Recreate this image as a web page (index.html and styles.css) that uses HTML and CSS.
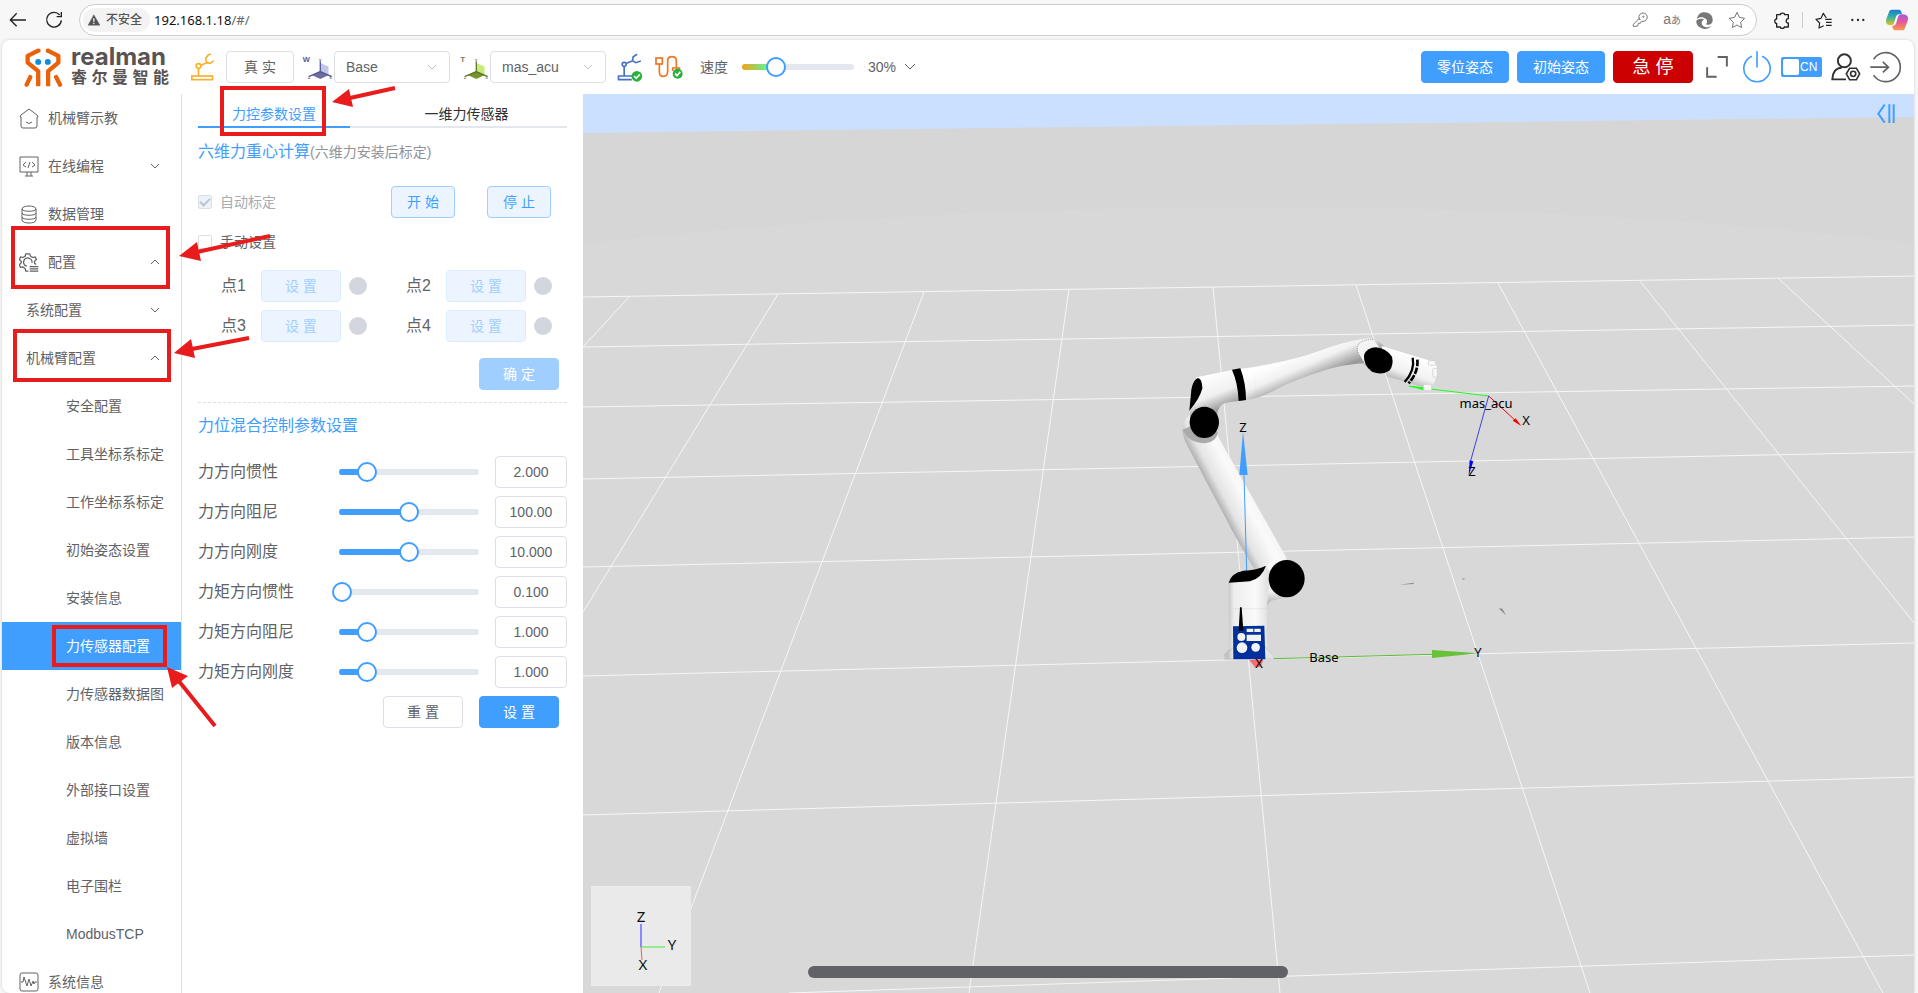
FILE: index.html
```html
<!DOCTYPE html>
<html lang="zh-CN">
<head>
<meta charset="utf-8">
<title>力传感器配置</title>
<link rel="stylesheet" href="styles.css">
</head>
<body>
<div class="window">
  <div class="browser-bar">
    <button class="icon-btn back" aria-label="返回"><svg width="18" height="18" viewBox="27 33 54 54" fill="none" stroke="#222" stroke-width="4"><path d="M78 60H32M50 40L31 60L50 79"/></svg></button>
    <button class="icon-btn reload" aria-label="刷新"><svg width="18" height="18" viewBox="135 33 54 54" fill="none" stroke="#222" stroke-width="4"><path d="M184 61a22 22 0 1 1-5-16M184 36v14h-14"/></svg></button>
    <div class="address">
      <span class="insecure"><svg width="12" height="12" viewBox="263 41 37 35"><path d="M281 42L300 75H263Z" fill="#555" stroke="#555" stroke-linejoin="round"/><path d="M281 53v11M281 67v4" stroke="#f3f3f3" stroke-width="4"/></svg>不安全</span>
      <span class="url">192.168.1.18<span class="url-path">/#/</span></span>
      <span class="address-tools">
        <svg width="16" height="16" viewBox="703 36 48 48" fill="none" stroke="#777" stroke-width="3"><path d="M727 60a12.500 12.500 0 1 1 9 4h-5l-3 6h-6l-2 8-6 1h-7v-6l18-18z"/><circle cx="737" cy="50" r="2"/></svg>
        <span class="translate">a<small>あ</small></span>
        <svg width="17" height="17" viewBox="893 35 50 50"><path d="M895 56C899 40 909 36 918 36C936 36 943 49 942 60C941 72 930 75 922 71C927 66 927 58 920 54C912 49 902 50 895 56ZM894 61C900 53 911 53 917 58C909 60 907 70 914 76C922 82 933 80 939 75C932 86 917 87 908 82C898 78 893 70 894 61Z" fill="#777"/></svg>
        <svg width="18" height="18" viewBox="987 35 54 52" fill="none" stroke="#777" stroke-width="3" stroke-linejoin="round"><path d="M1014 38l7 15 16 3-12 12 3 16-14-8-14 8 3-16-12-12 16-3z"/></svg>
      </span>
    </div>
    <div class="browser-tools">
      <svg width="16" height="17" viewBox="1120 34 48 51" fill="none" stroke="#222" stroke-width="4" stroke-linejoin="round"><path d="M1128 42h11c0-6 13-6 13 0h11v12c-8-1-9 14 0 13v12h-12c0 6-12 6-12 0h-11v-11c-7 1-8-14 0-13z"/></svg>
      <span class="divider"></span>
      <svg width="18" height="17" viewBox="1240 35 54 51" fill="none" stroke="#222" stroke-width="3.500" stroke-linejoin="round"><path d="M1274 53L1265 39L1258 54L1243 57L1254 68L1252 83L1266 76M1271 57H1290M1273 66H1290M1273 75H1290"/></svg>
      <svg width="16" height="6" viewBox="1350 51 48 18" fill="#222"><circle cx="1357" cy="60" r="3.500"/><circle cx="1374" cy="60" r="3.500"/><circle cx="1390" cy="60" r="3.500"/></svg>
      <svg width="22" height="22" viewBox="1455 27 66 66"><defs><linearGradient id="cpa" x1="0" y1="0" x2="0" y2="1"><stop offset="0" stop-color="#1778d6"/><stop offset=".5" stop-color="#38b6a0"/><stop offset="1" stop-color="#f0c018"/></linearGradient><linearGradient id="cpb" x1="0" y1="0" x2="0" y2="1"><stop offset="0" stop-color="#a45be0"/><stop offset=".5" stop-color="#e85a94"/><stop offset="1" stop-color="#f79a4a"/></linearGradient></defs><path d="M1473 29h20c7 0 8 6 10 14h-9c-6 0-8 4-10 10l-5 16c-2 5-5 7-10 7-12 0-16-8-13-19l7-18c2-7 4-10 10-10z" fill="url(#cpa)"/><path d="M1504 91h-20c-6 0-9-4-10-14 7 1 10-3 12-9l5-17c2-5 5-8 11-8 15-1 22 6 18 19l-7 19c-2 7-4 10-9 10z" fill="url(#cpb)"/></svg>
    </div>
  </div>

  <div class="app">
    <header class="topbar">
      <svg class="logo-mark" width="39" height="39" viewBox="16 18 118 118" fill="none" stroke="#ea6109" stroke-width="13" stroke-linejoin="round"><path d="M59 26L27 42V62L59 88V134M88 26L120 42V62L89 88V134"/><path d="M60 26H59M88 26H89M35 106L24 129M113 106L125 129" stroke-linecap="round"/><g fill="#0e8ddd" stroke="none"><circle cx="59" cy="60" r="9"/><circle cx="88" cy="60" r="9"/></g></svg>
      <div class="logo-text"><b class="logo-en">realman</b><b class="logo-cn"><span>睿</span><span>尔</span><span>曼</span><span>智</span><span>能</span></b></div>
      <svg class="arm-icon" width="25" height="28" viewBox="570 158 74 84" fill="none" stroke="#fbb02d" stroke-width="5"><rect x="575" y="227" width="62" height="11"/><path d="M595 226V204M602 195L620 187M620 187L616 175L624 164L632 161M620 187L630 189L641 181"/><circle cx="595" cy="197" r="7"/></svg>
      <button class="btn mode-btn">真 实</button>
      <svg class="axes-icon" width="31" height="25" viewBox="905 155 93 76"><path d="M960 179L985 190V217L960 206Z" fill="#c3c6ea"/><path d="M960 203L986 216L960 228L934 216Z" fill="#6b6f9e"/><path d="M960 175V206L926 220M960 206L994 220" stroke="#555a91" stroke-width="4" fill="none"/><g fill="#555a91" font-weight="700"><text x="907" y="177" font-size="23">W</text><text x="955" y="176" font-size="13">Y</text><text x="922" y="229" font-size="13">Z</text><text x="987" y="229" font-size="13">X</text></g></svg>
      <div class="select"><select aria-label="工作坐标系"><option>Base</option></select><svg width="10" height="7" viewBox="0 0 10 7"><path d="M1 1l4 4 4-4"/></svg></div>
      <svg class="axes-icon tool-axes" width="31" height="25" viewBox="905 155 93 76"><path d="M960 179L985 190V217L960 206Z" fill="#c9ea76"/><path d="M960 203L986 216L960 228L934 216Z" fill="#76932c"/><path d="M960 175V206L926 220M960 206L994 220" stroke="#5d7530" stroke-width="4" fill="none"/><g fill="#77805c" font-weight="700"><text x="911" y="177" font-size="24">T</text><text x="955" y="176" font-size="13">Y</text><text x="922" y="229" font-size="13">Z</text><text x="987" y="229" font-size="13">X</text></g></svg>
      <div class="select"><select aria-label="工具坐标系"><option>mas_acu</option></select><svg width="10" height="7" viewBox="0 0 10 7"><path d="M1 1l4 4 4-4"/></svg></div>
      <svg class="status-arm" width="26" height="29" viewBox="470 155 77 87" fill="none" stroke="#4672c4" stroke-width="5"><path d="M516 224H474V235H514M491 222V197M498 186L517 178M530 159L518 166L516 178L526 184L541 179"/><circle cx="491" cy="189" r="6"/><circle cx="529" cy="225" r="16" fill="#27b23b" stroke="none"/><path d="M521 224L527 231L538 219" stroke="#fff"/></svg>
      <svg class="status-cable" width="28" height="25" viewBox="588 163 84 75" fill="none" stroke="#f07420" stroke-width="5"><rect x="591" y="172" width="19" height="18"/><path d="M601 190V213Q601 227 613 227T626 213V180Q626 168 639 168T652 180V200M641 211V202H661V211"/><circle cx="656" cy="219" r="15" fill="#27b23b" stroke="none"/><path d="M648 218L654 225L664 213" stroke="#fff"/></svg>
      <label class="speed-label" for="speed">速度</label>
      <div class="slider speed-slider"><div class="slider-fill" style="width:30%"></div><input type="range" id="speed" min="0" max="100" value="30"></div>
      <button class="speed-value">30%<svg width="12" height="8" viewBox="0 0 12 8" fill="none" stroke="#606266"><path d="M1 1l5 5 5-5"/></svg></button>
      <div class="top-actions">
        <button class="btn primary pose">零位姿态</button>
        <button class="btn primary pose">初始姿态</button>
        <button class="btn stop">急 停</button>
        <button class="icon-btn full" aria-label="全屏"><svg width="22" height="22" viewBox="918 167 66 67" fill="none" stroke="#606266" stroke-width="6"><path d="M953 170H981V199M921 201V230H950"/></svg></button>
        <button class="icon-btn power" aria-label="电源"><svg width="30" height="32" viewBox="1025 152 90 97" fill="none" stroke="#409eff" stroke-width="5"><path d="M1070 153V202M1055 168A40 40 0 1 0 1085 168"/></svg></button>
        <button class="lang" aria-label="语言"><i></i>CN</button>
        <button class="icon-btn user" aria-label="用户"><svg width="30" height="28" viewBox="1293 158 90 86" fill="none" stroke="#303133" stroke-width="6"><circle cx="1333" cy="182" r="20"/><path d="M1338 239H1296C1296 220 1306 203 1325 203"/><path d="M1349 205H1370L1380 222L1370 240H1349L1339 222Z" stroke-width="5"/><circle cx="1360" cy="222" r="8" stroke-width="5"/></svg></button>
        <button class="icon-btn exit" aria-label="退出"><svg width="32" height="32" viewBox="1410 152 97 97" fill="none" stroke="#606266" stroke-width="5"><path d="M1421 177A44 44 0 1 1 1421 225M1411 201H1465M1449 185L1466 201L1449 217"/></svg></button>
      </div>
    </header>

    <div class="body">
      <nav class="sidebar">
        <a href="#" class="item"><svg width="20" height="21" viewBox="0 0 20 21"><path d="M2 7L10 1L18 7L19 9H18V18Q18 20 16 20H4Q2 20 2 18V9H1Z M7 14Q10 17 13 14"/></svg><span>机械臂示教</span></a>
        <a href="#" class="item"><svg width="20" height="21" viewBox="0 0 20 21"><path d="M1 1H19V16H1ZM8 16V20M12 16V20M6 20H14M7 6L4 9L7 11M13 6L16 9L13 11M11 6L9 12"/></svg><span>在线编程</span><svg class="chev" width="10" height="6" viewBox="0 0 10 6"><path d="M1 1l4 4 4-4"/></svg></a>
        <a href="#" class="item"><svg width="20" height="21" viewBox="0 0 20 21"><path d="M3 5C3 1 17 1 17 5C17 8 3 8 3 5V16C3 20 17 20 17 16V5M3 9C3 12 17 12 17 9M3 13C3 16 17 16 17 13"/></svg><span>数据管理</span></a>
        <a href="#" class="item"><svg class="gear" width="20" height="21" viewBox="57 484 62 63"><path d="M86 542H78L76 534L68 529L62 531L58 523L64 516V512L58 506L62 498L69 500L76 496L78 489H90L93 496L100 500L107 498L111 506L105 512V518L110 522M81 527A13 13 0 1 1 97 517M90 528H117M90 535H117M90 542H117"/></svg><span>配置</span><svg class="chev" width="10" height="6" viewBox="0 0 10 6"><path d="M1 5l4-4 4 4"/></svg></a>
        <a href="#" class="item sub"><span>系统配置</span><svg class="chev" width="10" height="6" viewBox="0 0 10 6"><path d="M1 1l4 4 4-4"/></svg></a>
        <a href="#" class="item sub"><span>机械臂配置</span><svg class="chev" width="10" height="6" viewBox="0 0 10 6"><path d="M1 5l4-4 4 4"/></svg></a>
        <a href="#" class="item leaf">安全配置</a>
        <a href="#" class="item leaf">工具坐标系标定</a>
        <a href="#" class="item leaf">工作坐标系标定</a>
        <a href="#" class="item leaf">初始姿态设置</a>
        <a href="#" class="item leaf">安装信息</a>
        <a href="#" class="item leaf active">力传感器配置</a>
        <a href="#" class="item leaf">力传感器数据图</a>
        <a href="#" class="item leaf">版本信息</a>
        <a href="#" class="item leaf">外部接口设置</a>
        <a href="#" class="item leaf">虚拟墙</a>
        <a href="#" class="item leaf">电子围栏</a>
        <a href="#" class="item leaf">ModbusTCP</a>
        <a href="#" class="item"><svg width="20" height="21" viewBox="0 0 20 21"><path d="M1 3Q1 1 3 1H17Q19 1 19 3V17Q19 19 17 19H3Q1 19 1 17ZM2 10H4L5 5L8 14L10 7L12 14L14 9L15 12L16 10H18"/></svg><span>系统信息</span></a>
      </nav>

      <section class="panel">
        <div class="tabs" role="tablist">
          <button class="tab current" role="tab" aria-selected="true">力控参数设置</button>
          <button class="tab" role="tab">一维力传感器</button>
        </div>
        <h2 class="title">六维力重心计算<small>(六维力安装后标定)</small></h2>
        <div class="row auto">
          <label class="check disabled"><input type="checkbox" checked disabled>自动标定</label>
          <div class="pair"><button class="btn plain">开 始</button><button class="btn plain">停 止</button></div>
        </div>
        <label class="check manual"><input type="checkbox">手动设置</label>
        <div class="points">
          <div class="point"><span>点1</span><button class="btn plain" disabled>设 置</button><i class="lamp"></i></div>
          <div class="point"><span>点2</span><button class="btn plain" disabled>设 置</button><i class="lamp"></i></div>
          <div class="point"><span>点3</span><button class="btn plain" disabled>设 置</button><i class="lamp"></i></div>
          <div class="point"><span>点4</span><button class="btn plain" disabled>设 置</button><i class="lamp"></i></div>
        </div>
        <div class="buttons confirm"><button class="btn primary" disabled>确 定</button></div>
        <h2 class="title second">力位混合控制参数设置</h2>
        <div class="params">
          <div class="param"><label for="p1">力方向惯性</label><div class="slider"><div class="slider-fill" style="width:20%"></div><input type="range" value="20" aria-label="力方向惯性"></div><input class="num" id="p1" value="2.000"></div>
          <div class="param"><label for="p2">力方向阻尼</label><div class="slider"><div class="slider-fill" style="width:50%"></div><input type="range" value="50" aria-label="力方向阻尼"></div><input class="num" id="p2" value="100.00"></div>
          <div class="param"><label for="p3">力方向刚度</label><div class="slider"><div class="slider-fill" style="width:50%"></div><input type="range" value="50" aria-label="力方向刚度"></div><input class="num" id="p3" value="10.000"></div>
          <div class="param"><label for="p4">力矩方向惯性</label><div class="slider"><div class="slider-fill" style="width:2%"></div><input type="range" value="2" aria-label="力矩方向惯性"></div><input class="num" id="p4" value="0.100"></div>
          <div class="param"><label for="p5">力矩方向阻尼</label><div class="slider"><div class="slider-fill" style="width:20%"></div><input type="range" value="20" aria-label="力矩方向阻尼"></div><input class="num" id="p5" value="1.000"></div>
          <div class="param"><label for="p6">力矩方向刚度</label><div class="slider"><div class="slider-fill" style="width:20%"></div><input type="range" value="20" aria-label="力矩方向刚度"></div><input class="num" id="p6" value="1.000"></div>
        </div>
        <div class="buttons"><button class="btn">重 置</button><button class="btn primary">设 置</button></div>
      </section>

      <main class="scene">
        <svg class="world" viewBox="583 94 1331 899" preserveAspectRatio="xMidYMid slice">
          <defs>
            <linearGradient id="upper" gradientUnits="userSpaceOnUse" x1="470" y1="100" x2="520" y2="215"><stop offset="0" stop-color="#fff"/><stop offset=".35" stop-color="#f1f1f1"/><stop offset=".75" stop-color="#999"/><stop offset="1" stop-color="#a5a5a5"/></linearGradient>
            <linearGradient id="lower" gradientUnits="userSpaceOnUse" x1="218" y1="547" x2="330" y2="488"><stop offset="0" stop-color="#999"/><stop offset=".3" stop-color="#e4e4e4"/><stop offset=".7" stop-color="#fafafa"/><stop offset="1" stop-color="#f4f4f4"/></linearGradient>
            <linearGradient id="elbow" gradientUnits="userSpaceOnUse" x1="210" y1="160" x2="250" y2="260"><stop offset="0" stop-color="#fff"/><stop offset=".6" stop-color="#f0f0f0"/><stop offset="1" stop-color="#a0a0a0"/></linearGradient>
            <linearGradient id="wrist" gradientUnits="userSpaceOnUse" x1="800" y1="100" x2="770" y2="190"><stop offset="0" stop-color="#fff"/><stop offset=".6" stop-color="#f1f1f1"/><stop offset="1" stop-color="#a5a5a5"/></linearGradient>
            <linearGradient id="base" gradientUnits="userSpaceOnUse" x1="264" y1="0" x2="382" y2="0"><stop offset="0" stop-color="#c4c4c4"/><stop offset=".15" stop-color="#ededed"/><stop offset=".7" stop-color="#fafafa"/><stop offset="1" stop-color="#e2e2e2"/></linearGradient>
            <linearGradient id="shoulder" gradientUnits="userSpaceOnUse" x1="0" y1="740" x2="0" y2="845"><stop offset="0" stop-color="#fafafa"/><stop offset=".7" stop-color="#f0f0f0"/><stop offset="1" stop-color="#bbb"/></linearGradient>
          </defs>
          <rect x="583" y="94" width="1331" height="899" fill="#cbe0ff"/>
          <path d="M583 133L1914 117V993H583Z" fill="#d6d6d6"/>
          <path d="M583 244Q900 208 1245 207T1914 243V993H583Z" fill="#d8d8d8"/>
          <g stroke="#f6f6f6" stroke-width="1" fill="none"><path d="M583 297L1914 276M583 347L1914 325M583 407L1914 386M583 479L1914 452M583 567L1914 537M583 676L1914 643M583 815L1914 777M789 993L1914 955"/><path d="M630 296L583 347M778 294L583 612M924 292L659 993M1069 289L969 993M1213 287L1280 993M1356 285L1590 993M1498 283L1883 993M1640 281L1914 623M1778 278L1914 404"/></g>
          <g transform="translate(1140 320) scale(.33333)">
            <path d="M127 330C130 300 145 285 160 280L225 330L240 360L440 715C420 760 370 770 340 742Q290 660 260 600Q180 450 140 372Q128 350 127 330Z" fill="url(#lower)"/>
            <path d="M128 330Q145 368 195 370Q228 366 234 338L190 300Z" fill="#aaa"/>
            <path d="M170 172L290 147L318 240L272 246Q240 248 234 272L228 300L150 300V268Z" fill="url(#elbow)"/>
            <path d="M298 147Q440 128 540 92Q630 60 685 55Q730 60 742 100L700 128Q600 130 520 162Q440 190 410 208Q360 236 318 240Z" fill="url(#upper)"/>
            <path d="M700 58Q640 60 655 100L676 135L730 100Z" fill="#f4f4f4"/>
            <path d="M700 58Q640 60 655 100L676 135" fill="none" stroke="#777" stroke-width="2" stroke-dasharray="3 3"/>
            <path d="M276 149L301 145Q318 190 318 240L296 243Q294 190 276 149Z" fill="#000"/>
            <path d="M340 140Q348 180 347 220" fill="none" stroke="#d0d0d0" stroke-dasharray="2 3"/>
            <path d="M173 174Q186 174 187 205Q180 235 148 272L154 210Q158 182 173 174Z" fill="#000"/>
            <ellipse cx="193" cy="307" rx="44" ry="47" fill="#000"/>
            <path d="M725 78L885 127Q902 160 872 208L740 169Z" fill="url(#wrist)"/>
            <path d="M818 113Q826 150 794 186" fill="none" stroke="#000" stroke-width="7"/><path d="M832 119Q836 155 806 190" fill="none" stroke="#000" stroke-width="8" stroke-dasharray="20 4"/>
            <g fill="#f8f8f8" stroke="#ccc" stroke-width="2"><rect x="865" y="122" width="22" height="14" rx="4"/><rect x="878" y="145" width="14" height="26" rx="4"/></g>
            <path d="M672 105Q682 82 708 82Q738 85 756 110Q762 135 748 152Q725 167 696 155Q670 137 672 105Z" fill="#000"/>
            <path d="M312 465L320 752" stroke="#409eff" stroke-width="3"/>
            <path d="M360 745L400 722L440 720L490 800L440 832L405 840Q382 842 380 866H340Z" fill="url(#shoulder)"/>
            <path d="M265 788L270 770L378 738L392 760L380 866V985L398 1003L397 1014L376 1018H256L252 1005L268 985Z" fill="url(#base)"/>
            <path d="M252 1005L278 985M398 1003L374 980M252 1017H280M374 1017H397" stroke="#bbb" stroke-width="2"/>
            <path d="M268 866H380" stroke="#ccc"/>
            <path d="M266 788Q272 760 310 752Q350 750 378 737Q365 775 330 784Q300 787 266 788Z" fill="#000"/>
            <ellipse cx="440" cy="776" rx="54" ry="56" fill="#000"/>
            <path d="M279 919L373 917L376 1018H280Z" fill="#00309c"/><path d="M300 862H305L310 932H296Z" fill="#000"/><g fill="#f2f2f2"><circle cx="304" cy="951" r="12"/><circle cx="306" cy="983" r="16"/><circle cx="347" cy="982" r="13"/><path d="M320 926H340V936H320ZM343 926H362V936H343ZM320 944H363V963H320Z"/></g>
            <path d="M309 335L323 465H298Z" fill="#409eff"/>
            <path d="M400 1016L876 1003" stroke="#5cbb33" stroke-width="3"/><path d="M876 990L1016 1000L876 1014Z" fill="#67c23a"/><path d="M328 1020L370 1018L362 1040L345 1042Z" fill="#f56c6c"/>
            <path d="M778 794L822 788L820 792ZM964 775L976 776L970 779ZM1076 865L1087 866L1098 886Z" fill="#888"/>
            <path d="M1046 228L806 199" stroke="#1bff1b" stroke-width="3"/><path d="M804 197L852 202L850 211Z" fill="#1bff1b"/><rect x="850" y="193" width="25" height="19" rx="5" fill="#f8f8f8" stroke="#ccc" stroke-width="2"/>
            <path d="M1046 228L1130 305" stroke="red" stroke-width="3"/><path d="M1144 318L1118 302L1127 295Z" fill="red"/>
            <path d="M1046 228L990 430" stroke="#4040e0" stroke-width="3"/><path d="M986 467L989 421L1000 424Z" fill="#00f"/>
          </g>
          <g class="scene-text" text-anchor="middle"><text x="1486" y="408">mas_acu</text><text x="1324" y="662">Base</text><text x="1243" y="432">Z</text><text x="1526" y="425">X</text><text x="1472" y="476">Z</text><text x="1478" y="657">Y</text><text x="1259" y="668">X</text></g>
        </svg>
        <button class="icon-btn collapse" aria-label="收起"><svg width="18" height="19" viewBox="1430 313 54 57" fill="none" stroke="#409eff" stroke-width="6"><path d="M1453 315L1434 342L1453 369M1467 314V370M1480 314V370"/></svg></button>
        <svg class="gizmo" width="100" height="100" viewBox="0 0 100 100"><path d="M50 38V61" stroke="#8888ff" stroke-width="2"/><path d="M50 61H74" stroke="#3bf03b" stroke-width="1"/><path d="M50 61L51 74" stroke="#f55" stroke-width="1"/><g class="gizmo-text" text-anchor="middle"><text x="50" y="36">Z</text><text x="81" y="64">Y</text><text x="52" y="84">X</text></g></svg>
        <div class="scene-bar"></div>
      </main>
    </div>
  </div>

  <svg class="marks" viewBox="0 0 1918 993" fill="none" stroke="#e81c1c" stroke-width="4"><rect x="222" y="88" width="102" height="46"/><rect x="13" y="228" width="155" height="59"/><rect x="15" y="331" width="154" height="49"/><rect x="54" y="627" width="111" height="38"/><path d="M395 88L350 98M270 236L197 252M249 338L192 349M215 726L178 680"/><path d="M332 102L349 89L353 107ZM179 256L197 242L201 261ZM174 353L191 339L195 358ZM167 667L188 676L172 688Z" fill="#e81c1c" stroke="none"/></svg>
</div>
</body>
</html>
```
FILE: styles.css
```css
* { box-sizing: border-box; }
body { margin: 0; background: #f7f7f7; color: #606266; font: 14px/20px "Liberation Sans", "Noto Sans CJK SC", sans-serif; }
button, input, select { font: inherit; color: inherit; margin: 0; }
svg { flex: none; display: block; }
.window { position: relative; display: flex; flex-direction: column; height: 100vh; overflow: hidden; }
.icon-btn { border: 0; background: none; padding: 0; flex: none; }

.browser-bar { display: flex; align-items: center; flex: none; height: 40px; padding: 0 10px 0 9px; }
.reload { margin: 0 16px 0 18px; }
.address { flex: 1; display: flex; align-items: center; height: 32px; padding: 0 10px 0 3px; background: #fff; border: 1px solid #ccc; border-radius: 16px; }
.insecure { display: flex; align-items: center; gap: 6px; height: 24px; padding: 0 8px 0 5px; border-radius: 12px; background: #f3f3f3; color: #555; font-size: 12px; font-weight: 500; }
.url { margin-left: 4px; font: 13px/20px "Noto Sans", sans-serif; color: #111; }
.url-path { color: #666; }
.address-tools { display: flex; align-items: center; gap: 15px; margin-left: auto; color: #777; }
.translate small { font-size: 10px; }
.browser-tools { display: flex; align-items: center; gap: 17px; margin-left: 17px; }
.browser-tools svg:last-child { margin-left: 3px; }
.divider { width: 1px; height: 16px; margin: 0 -5px; background: #ccc; }

.app { flex: 1; min-height: 0; display: flex; flex-direction: column; margin: 0 4px 0 2px; background: #fff; border-radius: 8px 8px 0 8px; box-shadow: 0 0 3px #ccc; overflow: hidden; }
.topbar { display: flex; align-items: center; flex: none; height: 54px; padding: 0 12px 0 22px; }
.logo-text { width: 98px; margin-left: 8px; color: #595453; }
.logo-en { display: block; font: 700 24px/22px Inter, sans-serif; }
.logo-cn { display: flex; justify-content: space-between; font-size: 16px; line-height: 20px; }
.arm-icon { margin: 0 11px 0 21px; }
.axes-icon { margin: 0 1px 0 8px; }
.btn { flex: none; width: 80px; height: 32px; padding: 0; border: 1px solid #dcdfe6; border-radius: 4px; background: #fff; white-space: nowrap; }
.mode-btn { width: 68px; }
.select { position: relative; flex: none; }
.select select { display: block; appearance: none; width: 116px; height: 32px; padding: 0 30px 0 11px; border: 1px solid #dcdfe6; border-radius: 4px; background: #fff; }
.select svg { position: absolute; right: 13px; top: 13px; fill: none; stroke: #c0c4cc; pointer-events: none; }
.status-arm { margin: 0 12px 0 11px; }
.speed-label { margin: 0 14px 0 17px; }
.slider { position: relative; display: flex; align-items: center; flex: none; width: 140px; height: 20px; }
.slider::before { content: ""; width: 100%; height: 6px; border-radius: 3px; background: #e4e7ed; }
.slider-fill { position: absolute; left: 0; height: 6px; border-radius: 3px 0 0 3px; background: #409eff; }
.slider input { position: absolute; left: -10px; width: calc(100% + 20px); height: 20px; appearance: none; background: none; }
.slider input::-webkit-slider-thumb { appearance: none; width: 20px; height: 20px; border: 2px solid #409eff; border-radius: 50%; background: #fff; }
.speed-slider { width: 112px; }
.speed-slider .slider-fill { background: linear-gradient(90deg, #f5a11a, #67f08a 70%); }
.speed-value { display: flex; align-items: center; gap: 8px; margin-left: 14px; padding: 0; border: 0; background: none; }
.top-actions { display: flex; align-items: center; margin-left: auto; }
.btn.primary { color: #fff; background: #409eff; border-color: #409eff; }
.pose { width: 88px; margin-right: 8px; }
.stop { color: #fff; background: #c00; border-color: #c00; font-size: 18px; }
.full { margin: 0 14px 0 13px; }
.lang { display: flex; align-items: center; width: 41px; height: 20px; margin: 0 9px; padding: 0 2px; gap: 1px; border: 0; border-radius: 2px; background: #409eff; color: #fff; font-size: 12px; }
.lang i { width: 16px; height: 16px; border-radius: 2px; background: #fff; }
.exit { margin-left: 9px; }

.body { flex: 1; min-height: 0; display: flex; }
.sidebar { flex: none; width: 180px; border-right: 1px solid #dcdfe6; overflow: hidden; }
.item { display: flex; align-items: center; gap: 9px; height: 48px; padding: 0 21px 0 17px; color: #606266; text-decoration: none; white-space: nowrap; }
.item svg { fill: none; stroke: #606266; stroke-width: 1; }
.item .gear { stroke-width: 4; stroke-linejoin: round; }
.chev { margin-left: auto; }
.sub { padding-left: 24px; }
.leaf { padding: 0 0 0 64px; }
.active { background: #409eff; color: #fff; }

.panel { flex: none; width: 401px; padding: 0 16px; }
.tabs { display: flex; height: 34px; }
.tab { flex: 1; padding: 8px 0 0 16px; border: 0; border-bottom: 2px solid #e4e7ed; background: none; color: #303133; }
.tab.current { flex: none; width: 152px; padding-left: 0; border-color: #409eff; color: #409eff; }
.title { margin: 14px 0 0; font-size: 16px; line-height: 20px; font-weight: 400; color: #409eff; }
.title small { font-size: 14px; color: #909399; }
.row { display: flex; justify-content: space-between; align-items: center; }
.auto { margin-top: 24px; padding-right: 16px; }
.pair { display: flex; gap: 32px; }
.pair .btn { width: 64px; }
.plain { color: #409eff; background: #ecf5ff; border-color: #a0cfff; }
.plain:disabled { color: #a0cfff; border-color: #d9ecff; }
.check { display: flex; align-items: center; gap: 8px; }
.check.disabled { color: #a8abb2; }
.check input { appearance: none; display: grid; place-items: center; width: 14px; height: 14px; border: 1px solid #dcdfe6; border-radius: 2px; background: #fff; }
.check input:checked { background: #edf2fc; }
.check input:checked::before { content: ""; width: 4px; height: 8px; margin-bottom: 2px; border: solid #c0c4cc; border-width: 0 2px 2px 0; transform: rotate(45deg); }
.manual { margin-top: 14px; }
.points { display: grid; grid-template-columns: 1fr 1fr; gap: 8px 0; margin-top: 18px; padding-left: 23px; }
.point { display: flex; align-items: center; gap: 8px; padding-right: 10px; font-size: 16px; }
.point .btn { margin-left: 7px; font-size: 14px; }
.point:nth-child(even) { padding-left: 12px; padding-right: 0; }
.lamp { width: 18px; height: 18px; border-radius: 50%; background: #d3d6de; }
.buttons { display: flex; justify-content: flex-end; gap: 16px; margin-top: 8px; padding-right: 8px; }
.confirm { margin-top: 16px; padding-bottom: 12px; border-bottom: 1px dashed #dcdfe6; }
.btn.primary:disabled { background: #a0cfff; border-color: #a0cfff; }
.second { margin-top: 13px; }
.params { display: grid; gap: 8px; margin-top: 20px; }
.param { display: flex; align-items: center; font-size: 16px; }
.param .slider { margin-left: auto; }
.num { width: 72px; height: 32px; margin-left: 16px; padding: 0; border: 1px solid #dcdfe6; border-radius: 4px; font-size: 14px; text-align: center; }

.scene { position: relative; flex: 1; min-width: 0; overflow: hidden; }
.world { width: 100%; height: 100%; }
.scene-text { font: 13px "Noto Sans", sans-serif; fill: #000; }
.collapse { position: absolute; top: 10px; right: 19px; }
.gizmo { position: absolute; left: 8px; bottom: 7px; background: #eaeaea; }
.gizmo-text { font: 15px "Noto Sans", sans-serif; fill: #111; }
.scene-bar { position: absolute; left: 225px; bottom: 15px; width: 480px; height: 12px; border-radius: 6px; background: #606266; }
.marks { position: absolute; inset: 0; width: 100%; height: 100%; pointer-events: none; }
```
